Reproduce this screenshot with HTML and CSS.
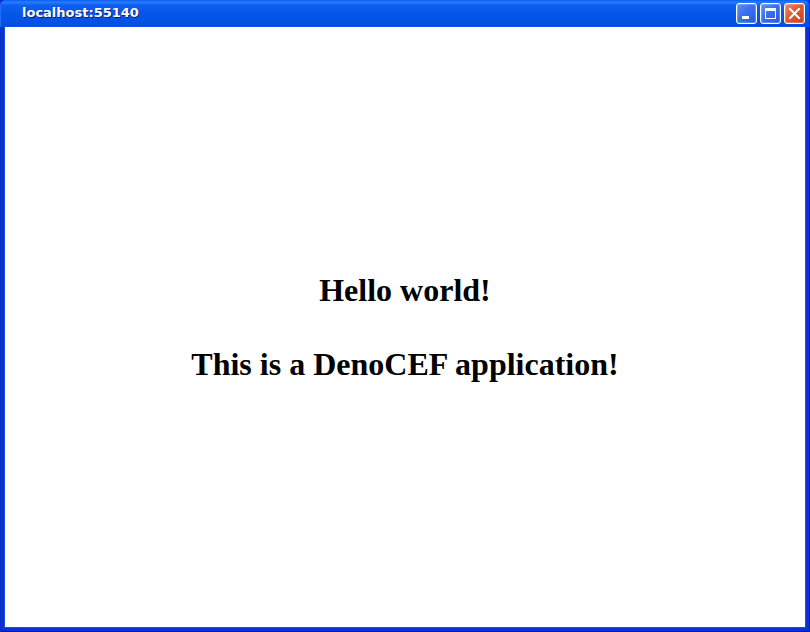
FILE: index.html
```html
<!DOCTYPE html>
<html>
<head>
<meta charset="utf-8">
<title>localhost:55140</title>
<link rel="stylesheet" href="styles.css">
</head>
<body>
<div class="window">
  <div class="titlebar">
    <span class="title">localhost:55140</span>
    <div class="controls">
      <div class="btn">
        <svg width="19" height="19" viewBox="0 0 19 19"><rect x="5" y="12" width="7" height="3" fill="#fff"/></svg>
      </div>
      <div class="btn">
        <svg width="19" height="19" viewBox="0 0 19 19"><rect x="4.5" y="4.5" width="10" height="10" fill="none" stroke="#fff" stroke-width="1"/><rect x="4" y="4" width="11" height="3" fill="#fff"/></svg>
      </div>
      <div class="btn close">
        <svg width="19" height="19" viewBox="0 0 19 19"><path d="M5 5 L14 14 M14 5 L5 14" stroke="#fff" stroke-width="2" stroke-linecap="square"/></svg>
      </div>
    </div>
  </div>
  <div class="frame">
    <div class="content">
      <h1 class="heading">Hello world!<br><br>This is a DenoCEF application!</h1>
    </div>
  </div>
</div>
</body>
</html>
```
FILE: styles.css
```css
html, body {
  margin: 0;
  padding: 0;
  width: 810px;
  height: 632px;
  overflow: hidden;
}

.window {
  width: 810px;
  height: 632px;
  display: flex;
  flex-direction: column;
  background: #0831d9;
}

.titlebar {
  height: 27px;
  flex: none;
  display: flex;
  align-items: center;
  justify-content: space-between;
  background: linear-gradient(to bottom, #0a5ff5 0%, #2a7cfb 8%, #0d5ef2 20%, #0656ea 50%, #0452e4 85%, #0447d3 100%);
  border-radius: 6px 6px 0 0;
  box-shadow: inset 1px 0 0 #1f6cf5, inset -1px 0 0 #0036c6;
}

.title {
  font-family: "DejaVu Sans", sans-serif;
  font-weight: bold;
  font-size: 13px;
  color: #fff;
  padding-left: 22px;
  text-shadow: 1px 1px 0 #0a1e6e;
  margin-top: -3px;
}

.controls {
  display: flex;
  gap: 3px;
  padding-right: 5px;
  margin-top: -1px;
}

.btn {
  width: 19px;
  height: 19px;
  border: 1px solid #fff;
  border-radius: 3px;
  background: linear-gradient(135deg, #5a8ff9 0%, #3a70ef 45%, #2459e0 100%);
  box-shadow: inset 0 0 1px 1px rgba(255,255,255,0.25);
  display: flex;
}

.btn.close {
  background: linear-gradient(135deg, #f08a66 0%, #e2582e 45%, #c9401c 100%);
}

.frame {
  flex: 1;
  display: flex;
  padding: 0 5px 5px 5px;
  background: #0831d9;
  box-shadow: inset 1px 0 0 #0a2fc0, inset -1px 0 0 #001ea0, inset 0 -1px 0 #001ea0;
}

.content {
  flex: 1;
  background: #fff;
  display: flex;
  align-items: center;
  justify-content: center;
  box-shadow: 0 0 0 1px #1450e8;
}

.heading {
  margin: 0;
  font-family: "Liberation Serif", "Times New Roman", serif;
  font-weight: bold;
  font-size: 32px;
  text-align: center;
  color: #000;
}
```
